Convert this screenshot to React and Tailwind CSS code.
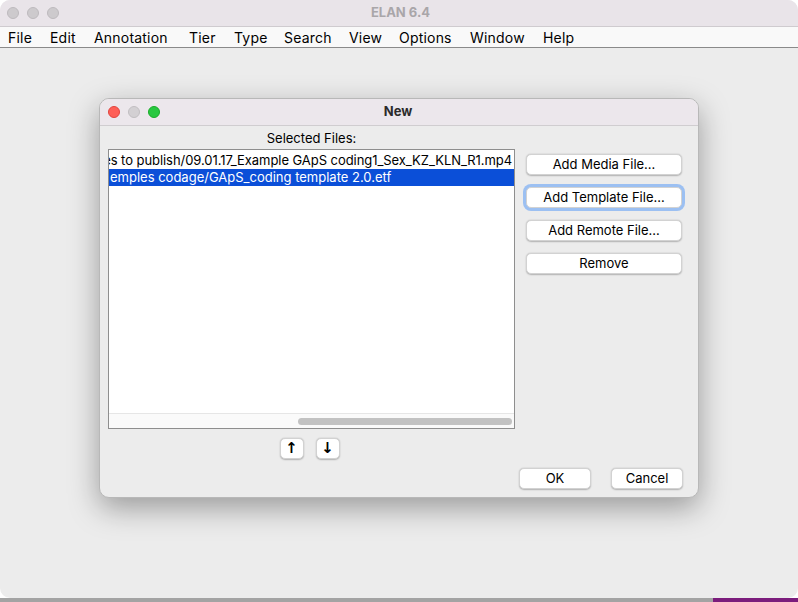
import React from "react";

const FONT = { fontFamily: "Inter, 'Noto Sans', 'Liberation Sans', sans-serif" };

function Light({ color }) {
  return <span className={`block w-[12px] h-[12px] rounded-full border-[0.5px] ${color}`} />;
}

function MacButton({ children, focused, className = "" }) {
  return (
    <button
      className={
        "h-[21px] rounded-[5px] bg-white text-[13px] text-black leading-none border-[0.5px] border-[#d2d2d2] shadow-[0_0.5px_1.5px_rgba(0,0,0,0.25)] " +
        (focused ? "ring-[3px] ring-[#9cc0f2] " : "") +
        className
      }
    >
      {children}
    </button>
  );
}

// menu label + fixed slot width so items land where the native menu bar puts them
const menus = [
  ["File", "w-[42px]"],
  ["Edit", "w-[44px]"],
  ["Annotation", "w-[95px]"],
  ["Tier", "w-[45px]"],
  ["Type", "w-[50px]"],
  ["Search", "w-[65px]"],
  ["View", "w-[50px]"],
  ["Options", "w-[71px]"],
  ["Window", "w-[73px]"],
  ["Help", "w-[50px]"],
];

export default function App() {
  return (
    <div className="w-[798px] h-[602px] flex flex-col bg-white overflow-hidden" style={FONT}>
      {/* Main ELAN window */}
      <div className="h-[598px] flex flex-col bg-[#ececec] rounded-t-[10px] rounded-b-[10px] overflow-hidden">
        {/* Title bar */}
        <div className="h-[27px] shrink-0 flex items-center bg-[#e9e4e9] border-b border-[#cfcbcf]">
          <div className="flex gap-[8px] pl-[7px]">
            <Light color="bg-[#cdcacd] border-[#bdb9bd]" />
            <Light color="bg-[#cdcacd] border-[#bdb9bd]" />
            <Light color="bg-[#cdcacd] border-[#bdb9bd]" />
          </div>
          <div className="flex-1 text-center text-[13px] font-bold text-[#a9a6a9] pr-[56px]">ELAN 6.4</div>
        </div>

        {/* Menu bar */}
        <div className="h-[21px] shrink-0 flex items-center bg-[#f9f9f9] border-b border-[#8a8a8a] pl-[8px] text-[14px] text-black tracking-[0.2px]">
          {menus.map(([m, w]) => (
            <span key={m} className={w}>
              {m}
            </span>
          ))}
        </div>

        {/* Body with dialog */}
        <div className="flex-1 pt-[50px] pl-[99px]">
          <div className="w-[600px] h-[400px] rounded-[10px] bg-[#ececec] border-[0.5px] border-[#b8b8b8] shadow-[0_10px_30px_rgba(0,0,0,0.35)] flex flex-col overflow-hidden">
            {/* Dialog title */}
            <div className="h-[27px] shrink-0 flex items-center bg-[#ece7ec] border-b border-[#d0cdd0]">
              <div className="flex gap-[8px] pl-[8px]">
                <Light color="bg-[#fe5f57] border-[#e0443e]" />
                <Light color="bg-[#d3d0d3] border-[#c1bec1]" />
                <Light color="bg-[#28c840] border-[#1aab29]" />
              </div>
              <div className="flex-1 text-center text-[13px] font-bold text-[#2b2b2b] pr-[62px]">New</div>
            </div>

            <div className="flex-1 flex flex-col">
              <div className="flex">
                {/* Left column */}
                <div className="w-[415px] pl-[8px] flex flex-col">
                  <div className="h-[23px] pt-[3px] flex items-center justify-center text-[13px] text-black">
                    Selected Files:
                  </div>
                  <div className="h-[280px] border border-[#8e8e8e] bg-white flex flex-col">
                    <div className="flex-1 pt-[2px] overflow-hidden text-[13px]">
                      <div className="h-[17px] flex items-center justify-end pr-[2px] overflow-hidden whitespace-nowrap text-black tracking-[-0.06px]">
                        <span className="shrink-0">es to publish/09.01.17_Example GApS coding1_Sex_KZ_KLN_R1.mp4</span>
                      </div>
                      <div className="h-[17px] flex items-center overflow-hidden whitespace-nowrap bg-[#0b4fd8] text-white">
                        <span className="ml-[1px]">emples codage/GApS_coding template 2.0.etf</span>
                      </div>
                    </div>
                    <div className="h-[15px] shrink-0 bg-[#fafafa] border-t border-[#e6e6e6] flex items-center justify-end pr-[2px]">
                      <div className="w-[214px] h-[7px] rounded-full bg-[#c2c2c2]" />
                    </div>
                  </div>
                  <div className="flex justify-center gap-[12px] mt-[9px] pr-[4px]">
                    <MacButton className="w-[24px] h-[18px]">
                      <span className="text-[15px] font-bold" style={{ fontFamily: "'DejaVu Sans', sans-serif" }}>↑</span>
                    </MacButton>
                    <MacButton className="w-[24px] h-[18px]">
                      <span className="text-[15px] font-bold" style={{ fontFamily: "'DejaVu Sans', sans-serif" }}>↓</span>
                    </MacButton>
                  </div>
                </div>

                {/* Right column */}
                <div className="ml-[11px] pt-[28px] flex flex-col gap-[12px]">
                  <MacButton className="w-[156px]">Add Media File...</MacButton>
                  <MacButton focused className="w-[156px]">Add Template File...</MacButton>
                  <MacButton className="w-[156px]">Add Remote File...</MacButton>
                  <MacButton className="w-[156px]">Remove</MacButton>
                </div>
              </div>

              {/* Footer */}
              <div className="flex justify-end gap-[20px] pr-[15px] mt-[9px]">
                <MacButton className="w-[72px]">OK</MacButton>
                <MacButton className="w-[72px]">Cancel</MacButton>
              </div>
            </div>
          </div>
        </div>
      </div>

      {/* Desktop strip below the window */}
      <div className="flex-1 flex">
        <div className="flex-1 bg-[#a3a3a3]" />
        <div className="w-[85px] bg-[#7b1c7c]" />
      </div>
    </div>
  );
}
